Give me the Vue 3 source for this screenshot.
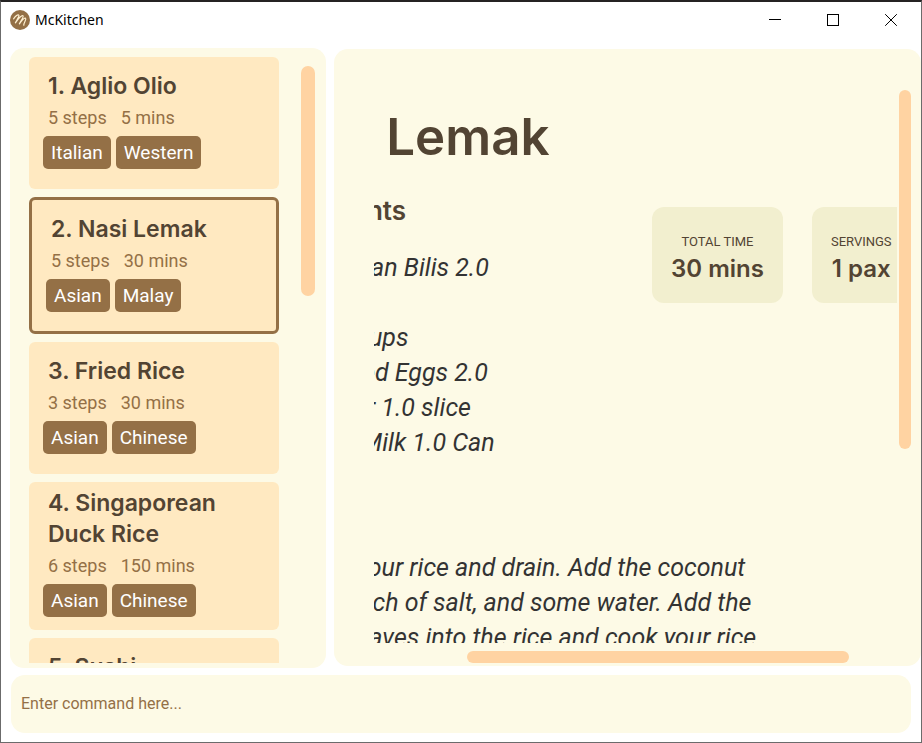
<script setup>
import { ref, onMounted } from 'vue'

const recipes = [
  { name: 'Aglio Olio', steps: 5, mins: 5, tags: ['Italian', 'Western'] },
  { name: 'Nasi Lemak', steps: 5, mins: 30, tags: ['Asian', 'Malay'] },
  { name: 'Fried Rice', steps: 3, mins: 30, tags: ['Asian', 'Chinese'] },
  { name: 'Singaporean Duck Rice', steps: 6, mins: 150, tags: ['Asian', 'Chinese'] },
  { name: 'Sushi', steps: 4, mins: 60, tags: ['Japanese'] },
]
const selected = ref(1)

const ingredients = [
  'Cooked Ikan Bilis 2.0',
  'Salt 1.0',
  'Rice 2.0 cups',
  'Hard-boiled Eggs 2.0',
  'Cucumber 1.0 slice',
  'Coconut Milk 1.0 Can',
]
const instructions = [
  '1. Wash your rice and drain. Add the coconut',
  'milk, a pinch of salt, and some water. Add the',
  'pandan leaves into the rice and cook your rice',
]
const stats = [
  { label: 'TOTAL TIME', value: '30 mins' },
  { label: 'SERVINGS', value: '1 pax' },
]

const command = ref('')
const viewport = ref(null)
const scrollStart = 110
onMounted(() => {
  viewport.value.scrollLeft = scrollStart
})
</script>

<template>
  <div class="window">
    <header class="titlebar">
      <svg class="logo" viewBox="0 0 20 20" aria-hidden="true">
        <circle cx="10" cy="10" r="10" fill="#947046" />
        <path
          d="M3.6 8.8C5.2 6.6 7.6 4.6 8.7 5C9.9 5.6 7.2 9.4 5.4 12.8C8 9.2 11.8 5.2 13 5.8C14.2 6.6 11 10.4 9.4 13.8C11.4 11 14.6 7.6 15.6 8.2C16.8 9.2 13.6 13 13.8 15.2"
          fill="none"
          stroke="#fff0d0"
          stroke-width="1.2"
          stroke-linecap="round"
          stroke-linejoin="round"
        />
      </svg>
      <h1 class="app-name">McKitchen</h1>
      <div class="controls">
        <button type="button" aria-label="Minimize">
          <svg viewBox="0 0 12 12" shape-rendering="crispEdges"><path d="M0 5.5H12" /></svg>
        </button>
        <button type="button" aria-label="Maximize">
          <svg viewBox="0 0 12 12" shape-rendering="crispEdges"><path d="M.5 .5H11.5V11.5H.5Z" /></svg>
        </button>
        <button type="button" aria-label="Close">
          <svg viewBox="0 0 12 12"><path d="M.2 .2L11.8 11.8M11.8 .2L.2 11.8" /></svg>
        </button>
      </div>
    </header>

    <main class="split">
      <section class="panel list-panel" aria-label="Recipes">
        <ol class="cards">
          <li
            v-for="(r, i) in recipes"
            :key="r.name"
            class="card"
            :class="{ selected: i === selected }"
            @click="selected = i"
          >
            <h2 class="card-title">{{ i + 1 }}. {{ r.name }}</h2>
            <p class="meta">
              <span>{{ r.steps }} steps</span>
              <span>{{ r.mins }} mins</span>
            </p>
            <div class="tags">
              <span v-for="t in r.tags" :key="t" class="tag">{{ t }}</span>
            </div>
          </li>
        </ol>
        <div class="track list-track"><div class="thumb list-thumb"></div></div>
      </section>

      <section class="panel detail-panel" aria-label="Recipe">
        <div ref="viewport" class="viewport">
          <article class="recipe">
            <h2 class="recipe-title">Nasi Lemak</h2>
            <div class="overview">
              <div class="ingredients">
                <h3>Ingredients</h3>
                <ul class="lines">
                  <li v-for="line in ingredients" :key="line">{{ line }}</li>
                </ul>
              </div>
              <dl v-for="s in stats" :key="s.label" class="stat">
                <dt>{{ s.label }}</dt>
                <dd>{{ s.value }}</dd>
              </dl>
            </div>
            <h3>Steps</h3>
            <div class="lines">
              <p v-for="line in instructions" :key="line">{{ line }}</p>
            </div>
          </article>
        </div>
        <div class="track v-track"><div class="thumb v-thumb"></div></div>
        <div class="track h-track"><div class="thumb h-thumb"></div></div>
      </section>
    </main>

    <form class="command" @submit.prevent="command = ''">
      <input v-model="command" type="text" aria-label="Command" placeholder="Enter command here..." />
    </form>
  </div>
</template>

<style>
body {
  background: #fff;
}
</style>

<style scoped>
* {
  box-sizing: border-box;
  margin: 0;
  padding: 0;
}
.window {
  display: flex;
  flex-direction: column;
  height: 100vh;
  border: 1px solid #6b6b6b;
  border-top: 2px solid #252323;
  background: #fff;
  font-family: Roboto, 'Liberation Sans', sans-serif;
  color: #524433;
}
.titlebar {
  display: flex;
  align-items: center;
  height: 36px;
  margin-bottom: 10px;
  padding: 0 1px 0 9px;
}
.logo {
  width: 20px;
  height: 20px;
}
.app-name {
  margin-left: 5px;
  font: 400 14px/20px 'Noto Sans', sans-serif;
  color: #000;
}
.controls {
  display: flex;
  margin-left: auto;
}
.controls button {
  display: grid;
  place-items: center;
  width: 58px;
  height: 36px;
  border: 0;
  background: none;
}
.controls svg {
  width: 12px;
  height: 12px;
  fill: none;
  stroke: #000;
}
.split {
  display: grid;
  grid-template-columns: 316px minmax(0, 1fr);
  gap: 8px;
  flex: 1;
  min-height: 0;
  padding-left: 9px;
}
.panel {
  display: grid;
  min-height: 0;
  background: #fdfae6;
  border-radius: 14px;
}
.list-panel {
  grid-template-columns: minmax(0, 1fr) 14px;
  column-gap: 22px;
  padding: 9px 11px 5px 19px;
}
.cards {
  display: flex;
  flex-direction: column;
  gap: 8px;
  min-height: 0;
  overflow: hidden;
  list-style: none;
}
.card {
  display: flex;
  flex: none;
  flex-direction: column;
  justify-content: center;
  box-sizing: content-box;
  min-height: 113px;
  padding: 6px 14px 13px;
  border-radius: 6px;
  background: #ffe9c1;
  cursor: pointer;
}
.card.selected {
  padding-bottom: 12px;
  border: 3px solid #947046;
}
.card-title {
  padding: 0 5px;
  font: 600 23px/31px Inter, sans-serif;
}
.meta {
  display: flex;
  gap: 14px;
  margin-bottom: 3px;
  padding: 0 5px;
  font-size: 18px;
  line-height: 31px;
  color: #947046;
}
.tags {
  display: flex;
  gap: 5px;
}
.tag {
  padding: 0 8px;
  border-radius: 5px;
  background: #947046;
  color: #fff;
  font-size: 19px;
  line-height: 33px;
}
.thumb {
  border-radius: 7px;
  background: #ffd3a2;
}
.list-track {
  padding-top: 9px;
}
.list-thumb {
  height: 38.5%;
}
.detail-panel {
  grid-template-columns: minmax(0, 1fr) 12px;
  grid-template-rows: minmax(0, 1fr) 12px;
  gap: 8px 2px;
  margin: 1px 0 2px;
  padding: 41px 10px 3px 40px;
}
.viewport {
  overflow: hidden;
}
.recipe {
  width: 780px;
}
.recipe-title {
  padding: 15px 0 28px;
  font: 600 51px/64px Inter, sans-serif;
}
h3 {
  font: 600 26px/28px Inter, sans-serif;
}
.overview {
  display: flex;
  align-items: flex-start;
  gap: 29px;
  margin-bottom: 37px;
}
.ingredients {
  width: 359px;
}
.lines {
  padding-top: 25px;
  list-style: none;
  font-size: 25px;
  font-style: italic;
  line-height: 35px;
  white-space: nowrap;
  color: #333;
}
.stat {
  margin-top: 10px;
  padding: 25px 19px 18px;
  border-radius: 12px;
  background: #f2efcf;
  text-align: center;
}
.stat dt {
  font-size: 13px;
  line-height: 20px;
}
.stat dd {
  font: 600 24px/33px Inter, sans-serif;
}
.v-thumb {
  height: 65%;
}
.h-track {
  padding: 0 48px 0 93px;
}
.h-thumb {
  height: 12px;
}
.command {
  display: flex;
  height: 58px;
  margin: 7px 10px 9px;
  border-radius: 14px;
  background: #fdfae6;
}
.command input {
  flex: 1;
  padding: 0 10px;
  border: 0;
  background: none;
  outline: none;
  font: 400 16px/20px Roboto, 'Liberation Sans', sans-serif;
  color: #524433;
}
.command input::placeholder {
  color: #947046;
  opacity: 1;
}
</style>
